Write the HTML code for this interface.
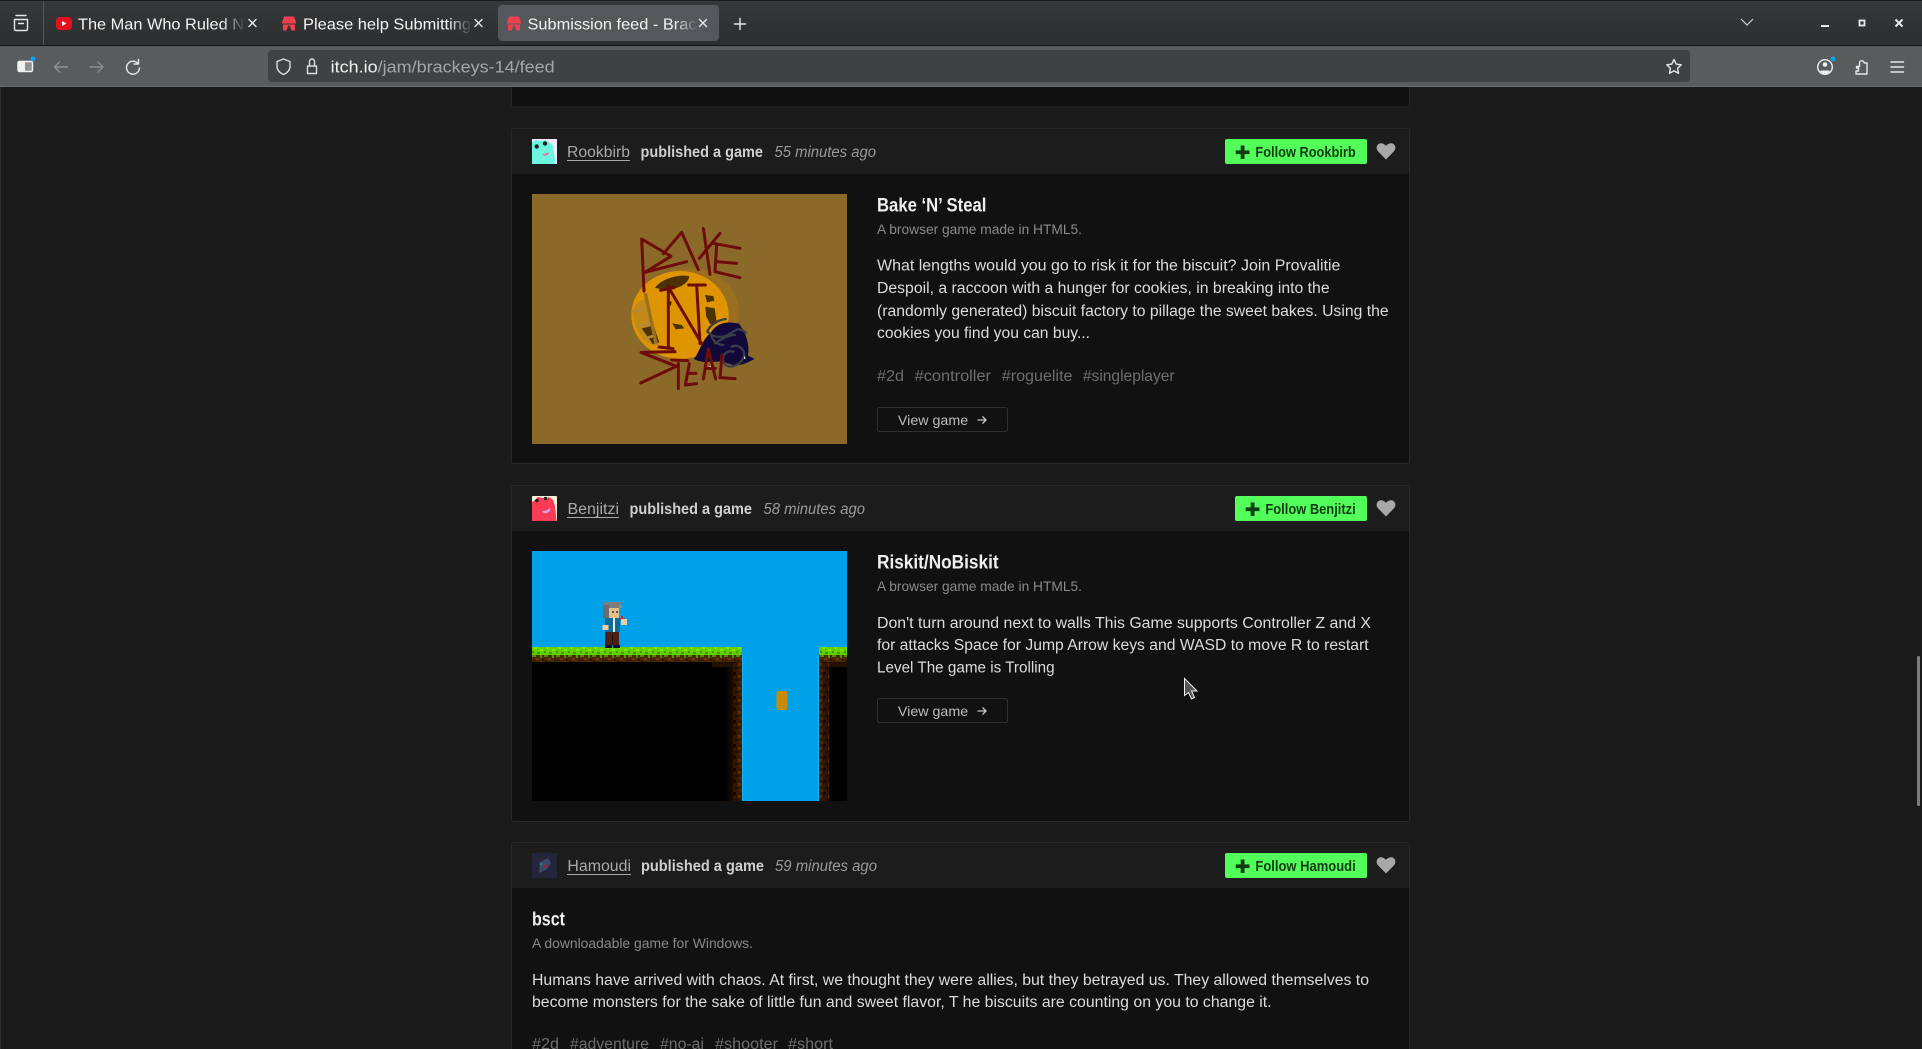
<!DOCTYPE html>
<html><head><meta charset="utf-8"><title>Submission feed</title>
<style>
html,body{margin:0;padding:0;background:#1a1a1a;overflow:hidden;width:1922px;height:1049px}
svg{display:block}
text{font-family:"Liberation Sans",sans-serif;white-space:pre}
.tab{font-size:16px;fill:#f2f2f2}
.name{font-size:15.5px;fill:#a9a9a9}
.pub{font-size:15.5px;font-weight:bold;fill:#cfcfcf}
.time{font-size:15.5px;font-style:italic;fill:#9a9a9a}
.fol{font-size:14.5px;font-weight:bold;fill:#0f3a11}
.ttl{font-size:19.5px;font-weight:bold;fill:#efefef}
.sub{font-size:14px;fill:#8a8a8a}
.dsc{font-size:15.5px;fill:#dcdcdc}
.tag{font-size:15.5px;fill:#6f6f6f}
.vw{font-size:14px;fill:#bdbdbd}
.ic{fill:none;stroke:#e8e8e8;stroke-width:1.4;stroke-linecap:round;stroke-linejoin:round}
.dim{fill:none;stroke:#8d9090;stroke-width:1.4;stroke-linecap:round;stroke-linejoin:round}
.sw{fill:none;stroke:#6e0b0b;stroke-width:9;stroke-linecap:round;stroke-linejoin:round}
</style></head>
<body>
<svg width="1922" height="1049" viewBox="0 0 1922 1049" xmlns="http://www.w3.org/2000/svg">
<defs>
<linearGradient id="f1" gradientUnits="userSpaceOnUse" x1="222" x2="244" y1="0" y2="0"><stop offset="0" stop-color="#f2f2f2"/><stop offset="1" stop-color="#f2f2f2" stop-opacity=".05"/></linearGradient>
<linearGradient id="f2" gradientUnits="userSpaceOnUse" x1="449" x2="471" y1="0" y2="0"><stop offset="0" stop-color="#f2f2f2"/><stop offset="1" stop-color="#f2f2f2" stop-opacity=".05"/></linearGradient>
<linearGradient id="f3" gradientUnits="userSpaceOnUse" x1="675" x2="697" y1="0" y2="0"><stop offset="0" stop-color="#f2f2f2"/><stop offset="1" stop-color="#f2f2f2" stop-opacity=".05"/></linearGradient>
<linearGradient id="tb" x1="0" x2="0" y1="0" y2="1"><stop offset="0" stop-color="#36383a"/><stop offset="1" stop-color="#2c2e30"/></linearGradient>
<linearGradient id="fadeL" x1="0" x2="1" y1="0" y2="0"><stop offset="0" stop-color="#000"/><stop offset="1" stop-color="#3a1b04"/></linearGradient>
<linearGradient id="fadeR" x1="0" x2="1" y1="0" y2="0"><stop offset="0" stop-color="#3a1b04"/><stop offset="1" stop-color="#000"/></linearGradient>
<pattern id="grass" patternUnits="userSpaceOnUse" x="532" y="647" width="12" height="16">
<rect width="12" height="16" fill="#4c2606"/>
<rect width="12" height="8" fill="#62cf00"/>
<rect x="2" y="0" width="3" height="2" fill="#84e600"/><rect x="8" y="2" width="3" height="2" fill="#84e600"/>
<rect x="0" y="4" width="2" height="2" fill="#3f9a00"/><rect x="5" y="5" width="3" height="2" fill="#3f9a00"/>
<rect x="0" y="8" width="4" height="2" fill="#4f8a00"/><rect x="8" y="8" width="2" height="3" fill="#3f9a00"/>
<rect x="4" y="11" width="3" height="2" fill="#6a390a"/><rect x="10" y="12" width="2" height="2" fill="#2e1703"/><rect x="1" y="13" width="2" height="2" fill="#2e1703"/>
</pattern>
<pattern id="dirt" patternUnits="userSpaceOnUse" x="733" y="660" width="9" height="12">
<rect width="9" height="12" fill="#3a1c04" fill-opacity=".55"/>
<rect x="0" y="0" width="3" height="3" fill="#000" fill-opacity=".6"/><rect x="5" y="3" width="3" height="3" fill="#5a2e07"/>
<rect x="2" y="7" width="3" height="2" fill="#1c0d02"/><rect x="6" y="9" width="3" height="3" fill="#4c2606"/>
</pattern>
</defs>

<!-- page -->
<rect width="1922" height="1049" fill="#1a1a1a"/>
<rect x="0" y="87" width="1" height="962" fill="#2b2b2b"/>

<!-- top card remainder -->
<rect x="511.5" y="80" width="898" height="27" rx="2" fill="#101010" stroke="#272727"/>

<!-- card 1 -->
<rect x="511.5" y="128.500" width="898" height="335" rx="2" fill="#111" stroke="#272727"/>
<path d="M512 174V131q0-2 2-2h893q2 0 2 2v43z" fill="#1c1c1c"/>
<rect x="532" y="139" width="25" height="25" fill="#f1e6fb"/>
<path d="M532 142l4-2 4 1 5-1 4 2 4 3 2 14 0 5h-23z" fill="#6df5dd"/>
<circle cx="536.700" cy="146.500" r="2.200" fill="#222"/><circle cx="545" cy="143.500" r="2.200" fill="#222"/>
<path d="M542.500 154q4 0 7-2-1 3-4 3.500q-2 .5-3-1.500z" fill="#f06a92"/>
<text class="name" x="567" y="157" textLength="63" lengthAdjust="spacingAndGlyphs">Rookbirb</text>
<rect x="567" y="160" width="63" height="1" fill="#a9a9a9"/>
<text class="pub" x="640.500" y="157" textLength="122.500" lengthAdjust="spacingAndGlyphs">published a game</text>
<text class="time" x="774.500" y="157" textLength="101.500" lengthAdjust="spacingAndGlyphs">55 minutes ago</text>
<rect x="1225" y="139" width="142" height="25" rx="2" fill="#52ff5a"/>
<rect x="1240.700" y="145.500" width="3.800" height="13.500" fill="#0f3d12"/><rect x="1235.700" y="150.400" width="13.800" height="3.700" fill="#0f3d12"/>
<text class="fol" x="1255.400" y="157" textLength="100.300" lengthAdjust="spacingAndGlyphs">Follow Rookbirb</text>
<path d="M1386 159.500l-7.700-7.900c-2.300-2.500-2.100-5.400-.3-7.100 2-1.900 5.200-1.600 8 1.300 2.800-2.900 6-3.200 8-1.300 1.800 1.700 2 4.600-.3 7.100z" fill="#a8a8a8"/>

<!-- bake n steal image -->
<rect x="532" y="194" width="315" height="250" fill="#8b6a29"/>
<g transform="translate(600 215) scale(.33333)">
<ellipse cx="265" cy="290" rx="152" ry="130" fill="#9a6f20"/>
<ellipse cx="240" cy="300" rx="146" ry="132" fill="#de9500"/>
<path d="M100 300c-2-25 8-42 40-50l38 135c-4 6-10 8-14 8-40-15-62-55-64-93z" fill="#c48a18"/>
<path d="M125 340l35-8 18 50-20 5z" fill="#4b3200"/>
<path d="M165 218c20-28 75-42 103-34-4 30-60 50-103 34z" fill="#4b3200"/>
<path d="M315 240l25 3 3 14-22 5z M316 275l28 5 6 42-20 5-12-25z M217 325l28 5 8 10-26 3z M205 258l10 2-2 12-10-2z" fill="#4b3200"/>
<path d="M97 290l40-8M112 333l38-8M128 372l36-10" stroke="#b58a37" stroke-width="8" fill="none"/>
<path d="M136 235l32 150" stroke="#9a6f20" stroke-width="10" fill="none"/>
<path d="M282 432c15-18 25-60 50-78 20-35 55-35 85-28l12 18c12 20 20 55 15 78l20 10-25 12c-30 12-50 5-70-5-30 0-60 8-87-7z" fill="#12083a"/>
<path d="M322 350c10-25 35-35 55-38M322 350c20 20 50 20 70 5 15-10 25-20 45-2M345 385c15-10 40-25 60-25M395 395c20-10 45 10 35 35-15 25-50 35-60 10-5-20 10-35 30-30M335 365c5 15 20 25 35 25" fill="none" stroke="#3a3d4a" stroke-width="7" stroke-linecap="round"/>
<rect x="432" y="425" width="4" height="7" fill="#ddd"/><rect x="328" y="453" width="6" height="3" fill="#ddd"/>
<path class="sw" d="M132 228L125 72l88 52-78 48 125-32M190 116l55-64 50 112M298 130l62-75M310 40l20 138M340 85l80 15M350 90l-5 80 75 18M350 140l60 5"/>
<path class="sw" d="M205 212l0 188M182 226l40-8M205 216l100 170M290 210l10 176M266 210l50 0M177 396l42 5"/>
<path class="sw" d="M225 410l-102 2 106 42-107 50M235 445l0 76M215 435l48 2M268 446l-12 64 34-4M262 475l26 0M310 492l15-90 22 90M318 460l28 0M366 420l-6 68 45 3"/>
</g>

<!-- card 1 text -->
<text class="ttl" x="877" y="211.500" textLength="109.400" lengthAdjust="spacingAndGlyphs">Bake ‘N’ Steal</text>
<text class="sub" x="877" y="234" textLength="205" lengthAdjust="spacingAndGlyphs">A browser game made in HTML5.</text>
<text class="dsc" x="877" y="270.500" textLength="463.400" lengthAdjust="spacingAndGlyphs">What lengths would you go to risk it for the biscuit? Join Provalitie</text>
<text class="dsc" x="877" y="293" textLength="452.600" lengthAdjust="spacingAndGlyphs">Despoil, a raccoon with a hunger for cookies, in breaking into the</text>
<text class="dsc" x="877" y="316" textLength="511.600" lengthAdjust="spacingAndGlyphs">(randomly generated) biscuit factory to pillage the sweet bakes. Using the</text>
<text class="dsc" x="877" y="338" textLength="213" lengthAdjust="spacingAndGlyphs">cookies you find you can buy...</text>
<text class="tag" x="877" y="381" textLength="27" lengthAdjust="spacingAndGlyphs">#2d</text>
<text class="tag" x="914.600" y="381" textLength="76.400" lengthAdjust="spacingAndGlyphs">#controller</text>
<text class="tag" x="1001.800" y="381" textLength="70.700" lengthAdjust="spacingAndGlyphs">#roguelite</text>
<text class="tag" x="1082.900" y="381" textLength="91.700" lengthAdjust="spacingAndGlyphs">#singleplayer</text>
<rect x="877.500" y="407.500" width="130" height="24" rx="2" fill="#111" stroke="#303030"/>
<text class="vw" x="897.900" y="425" textLength="70.300" lengthAdjust="spacingAndGlyphs">View game</text>
<path d="M977.500 420h8.500M982.500 416.500l3.500 3.500-3.500 3.500" fill="none" stroke="#c8c8c8" stroke-width="1.300"/>

<!-- card 2 -->
<rect x="511.500" y="485.500" width="898" height="336" rx="2" fill="#111" stroke="#272727"/>
<path d="M512 531V488q0-2 2-2h893q2 0 2 2v43z" fill="#1c1c1c"/>
<rect x="532" y="496" width="25" height="25" rx="1" fill="#fbf0d5"/>
<path d="M532 502l3-2 3-3 5 1 2 2 4-3 4 3 2 6 1.500 15h-24.500z" fill="#fb3a55"/>
<circle cx="537" cy="500.500" r="1.800" fill="#222"/><circle cx="545.500" cy="498.500" r="1.800" fill="#222"/>
<path d="M542 511q5 0 8-3 1 3-3 5-3 1-5-2z" fill="#d5a4ef"/>
<text class="name" x="567.500" y="514" textLength="51.500" lengthAdjust="spacingAndGlyphs">Benjitzi</text>
<rect x="567" y="517" width="52" height="1" fill="#a9a9a9"/>
<text class="pub" x="629.500" y="514" textLength="122.500" lengthAdjust="spacingAndGlyphs">published a game</text>
<text class="time" x="763.500" y="514" textLength="101.500" lengthAdjust="spacingAndGlyphs">58 minutes ago</text>
<rect x="1235" y="496" width="132" height="25" rx="2" fill="#52ff5a"/>
<rect x="1250.700" y="502.500" width="3.800" height="13.500" fill="#0f3d12"/><rect x="1245.700" y="507.400" width="13.800" height="3.700" fill="#0f3d12"/>
<text class="fol" x="1265.400" y="514" textLength="90.300" lengthAdjust="spacingAndGlyphs">Follow Benjitzi</text>
<path d="M1386 516.500l-7.700-7.900c-2.300-2.500-2.100-5.400-.3-7.100 2-1.900 5.200-1.600 8 1.300 2.800-2.900 6-3.200 8-1.300 1.800 1.700 2 4.600-.3 7.100z" fill="#a8a8a8"/>

<!-- platformer image -->
<rect x="532" y="551" width="315" height="250" fill="#00a1e8"/>
<rect x="532" y="662" width="210" height="139" fill="#000"/>
<rect x="819" y="662" width="28" height="139" fill="#000"/>
<rect x="725" y="662" width="17" height="139" fill="url(#fadeL)"/>
<rect x="819" y="662" width="14" height="139" fill="url(#fadeR)"/>
<rect x="733" y="660" width="9" height="141" fill="url(#dirt)"/>
<rect x="819" y="660" width="10" height="141" fill="url(#dirt)"/>
<rect x="712" y="662" width="21" height="5" fill="#241002"/>
<rect x="829" y="662" width="18" height="5" fill="#241002"/>
<rect x="532" y="647" width="210" height="15" fill="url(#grass)"/>
<rect x="819" y="647" width="28" height="15" fill="url(#grass)"/>
<rect x="742" y="656" width="1" height="145" fill="#19b6ff"/><rect x="818" y="656" width="1" height="145" fill="#19b6ff"/>
<path d="M777 691h10v1h.500v16h-.500v2h-10v-2h-.500v-16h.500z" fill="#c98a0a"/>
<!-- character -->
<g shape-rendering="crispEdges">
<rect x="604" y="602" width="17" height="6" fill="#7d7d7d"/><rect x="603" y="605" width="6" height="13" fill="#6c6c6c"/>
<rect x="619" y="605" width="3" height="3" fill="#8f8f8f"/>
<rect x="609" y="608" width="10" height="10" fill="#e9bd86"/><rect x="612" y="611" width="2" height="2" fill="#555"/><rect x="616" y="611" width="2" height="2" fill="#555"/>
<rect x="605" y="618" width="15" height="14" fill="#0f6a96"/><rect x="613" y="618" width="2" height="14" fill="#e6f2f6"/>
<rect x="605" y="632" width="14" height="13" fill="#4c2016"/><rect x="612" y="635" width="1" height="10" fill="#2a100a"/>
<rect x="605" y="645" width="7" height="3" fill="#0b0b0b"/><rect x="613" y="645" width="7" height="3" fill="#0b0b0b"/>
<rect x="602.500" y="625" width="6" height="5" fill="#f0cda0"/>
<rect x="621" y="619" width="6" height="6" fill="#f0cda0"/><rect x="621" y="616" width="2" height="3" fill="#d8241c"/><rect x="619" y="618" width="2" height="2" fill="#b83030"/>
</g>

<!-- card 2 text -->
<text class="ttl" x="877" y="568.500" textLength="121.600" lengthAdjust="spacingAndGlyphs">Riskit/NoBiskit</text>
<text class="sub" x="877" y="591" textLength="205" lengthAdjust="spacingAndGlyphs">A browser game made in HTML5.</text>
<text class="dsc" x="877" y="628" textLength="494" lengthAdjust="spacingAndGlyphs">Don't turn around next to walls This Game supports Controller Z and X</text>
<text class="dsc" x="877" y="650" textLength="491.600" lengthAdjust="spacingAndGlyphs">for attacks Space for Jump Arrow keys and WASD to move R to restart</text>
<text class="dsc" x="877" y="672.500" textLength="177.600" lengthAdjust="spacingAndGlyphs">Level The game is Trolling</text>
<rect x="877.500" y="698.500" width="130" height="24" rx="2" fill="#111" stroke="#303030"/>
<text class="vw" x="897.900" y="716" textLength="70.300" lengthAdjust="spacingAndGlyphs">View game</text>
<path d="M977.500 711h8.500M982.500 707.500l3.500 3.500-3.500 3.500" fill="none" stroke="#c8c8c8" stroke-width="1.300"/>
<!-- mouse cursor -->
<path d="M1184.500 678.500v17l4-3 3 6.500 3-1.500-3-6.500h5.500z" fill="#555" stroke="#eee" stroke-width="1"/>

<!-- card 3 -->
<rect x="511.500" y="842.500" width="898" height="230" rx="2" fill="#111" stroke="#272727"/>
<path d="M512 888V845q0-2 2-2h893q2 0 2 2v43z" fill="#1c1c1c"/>
<rect x="532" y="853" width="25" height="25" fill="#24243a"/>
<path d="M540 862l8-4 3 5-5 7-7 3z" fill="#3c4a66"/><circle cx="546" cy="866" r="2.200" fill="#7a3044"/><circle cx="541" cy="864" r="1.300" fill="#3a7a90"/>
<text class="name" x="567.400" y="871" textLength="63.600" lengthAdjust="spacingAndGlyphs">Hamoudi</text>
<rect x="567" y="874" width="64" height="1" fill="#a9a9a9"/>
<text class="pub" x="641" y="871" textLength="123" lengthAdjust="spacingAndGlyphs">published a game</text>
<text class="time" x="775" y="871" textLength="102" lengthAdjust="spacingAndGlyphs">59 minutes ago</text>
<rect x="1225" y="853" width="142" height="25" rx="2" fill="#52ff5a"/>
<rect x="1240.700" y="859.500" width="3.800" height="13.500" fill="#0f3d12"/><rect x="1235.700" y="864.400" width="13.800" height="3.700" fill="#0f3d12"/>
<text class="fol" x="1255.400" y="871" textLength="100.300" lengthAdjust="spacingAndGlyphs">Follow Hamoudi</text>
<path d="M1386 873.500l-7.700-7.900c-2.300-2.500-2.100-5.400-.3-7.100 2-1.900 5.200-1.600 8 1.300 2.800-2.900 6-3.200 8-1.300 1.800 1.700 2 4.600-.3 7.100z" fill="#a8a8a8"/>
<text class="ttl" x="532" y="925.500" textLength="33" lengthAdjust="spacingAndGlyphs">bsct</text>
<text class="sub" x="532" y="948" textLength="221" lengthAdjust="spacingAndGlyphs">A downloadable game for Windows.</text>
<text class="dsc" x="532" y="985" textLength="837" lengthAdjust="spacingAndGlyphs">Humans have arrived with chaos. At first, we thought they were allies, but they betrayed us. They allowed themselves to</text>
<text class="dsc" x="532" y="1007" textLength="739.600" lengthAdjust="spacingAndGlyphs">become monsters for the sake of little fun and sweet flavor, T he biscuits are counting on you to change it.</text>
<text class="tag" x="532" y="1049" textLength="27" lengthAdjust="spacingAndGlyphs">#2d</text>
<text class="tag" x="570" y="1049" textLength="79" lengthAdjust="spacingAndGlyphs">#adventure</text>
<text class="tag" x="660" y="1049" textLength="44" lengthAdjust="spacingAndGlyphs">#no-ai</text>
<text class="tag" x="715" y="1049" textLength="63" lengthAdjust="spacingAndGlyphs">#shooter</text>
<text class="tag" x="788" y="1049" textLength="45" lengthAdjust="spacingAndGlyphs">#short</text>

<!-- scrollbar -->
<rect x="1917" y="656" width="3" height="150" rx="1" fill="#7c7c7c"/>

<!-- browser chrome -->
<rect x="0" y="0" width="1922" height="45" fill="url(#tb)"/>
<rect x="0" y="0" width="1922" height="1" fill="#1a1b1c"/>
<rect x="0" y="45" width="1922" height="1" fill="#141516"/>
<rect x="0" y="46" width="1922" height="40" fill="#585c5d"/>
<rect x="0" y="86" width="1922" height="1" fill="#6b6e6f"/>
<rect x="43" y="1" width="1" height="44" fill="#55585a"/>

<!-- tab list icon -->
<path class="ic" d="M14.500 19.500h13v9.500q0 1.500-1.500 1.500h-10q-1.500 0-1.500-1.500zM16 15.500h10M18.500 23.500h5"/>

<!-- tab 1 -->
<rect x="56" y="17" width="16" height="13" rx="4" fill="#e8101e"/>
<path d="M62 21l4.500 2.500-4.500 2.500z" fill="#fff"/>
<text class="tab" x="78" y="29.500" textLength="166" lengthAdjust="spacingAndGlyphs" style="fill:url(#f1)">The Man Who Ruled N</text>
<path class="ic" d="M249 19.500l7 7M256 19.500l-7 7"/>

<!-- tab 2 -->
<path d="M284 16.500h10l2 6v1h-14v-1z" fill="#f0404f"/>
<path d="M283 24.500h12v6h-12z" fill="#f0404f"/>
<path d="M286.500 30.500l1.800-5h1.400l1.800 5z" fill="#2f3133"/>
<text class="tab" x="303" y="29.500" textLength="168" lengthAdjust="spacingAndGlyphs" style="fill:url(#f2)">Please help Submitting</text>
<path class="ic" d="M475 19.500l7 7M482 19.500l-7 7"/>

<!-- tab 3 -->
<rect x="498" y="5" width="221" height="36" rx="4" fill="#54585a"/>
<path d="M509 16.500h10l2 6v1h-14v-1z" fill="#f0404f"/>
<path d="M508 24.500h12v6h-12z" fill="#f0404f"/>
<path d="M511.500 30.500l1.800-5h1.400l1.800 5z" fill="#54585a"/>
<text class="tab" x="527.500" y="29.500" textLength="169" lengthAdjust="spacingAndGlyphs" style="fill:url(#f3)">Submission feed - Brac</text>
<path class="ic" d="M699.500 19.500l7 7M706.500 19.500l-7 7"/>

<!-- new tab -->
<path class="ic" d="M740 18.500v11M734.500 24h11"/>

<!-- tab-strip right -->
<path d="M1741 19l6 6 6-6" fill="none" stroke="#d0d0d0" stroke-width="1.200"/>
<rect x="1821" y="25" width="8" height="2" fill="#e8e8e8"/>
<rect x="1859.500" y="20.500" width="5" height="5" fill="none" stroke="#e8e8e8" stroke-width="1.800"/>
<path d="M1895.500 19.500l7 7M1902.500 19.500l-7 7" stroke="#e8e8e8" stroke-width="2" fill="none"/>

<!-- toolbar left -->
<rect x="18" y="61.500" width="14.500" height="10" rx="1.500" fill="#8f9292" stroke="#f2f2f2" stroke-width="1.500"/>
<rect x="18" y="61.500" width="7" height="10" fill="#f2f2f2"/>
<circle cx="33" cy="59" r="2.500" fill="#0aa0f0"/>
<path class="dim" d="M54.500 67h13M59.500 62l-5 5 5 5"/>
<path class="dim" d="M90 67h13M98 62l5 5-5 5"/>
<path class="ic" d="M138 63.500a6.500 6.500 0 1 0 1.500 4.500M138.500 59.500v4.500h-4.500"/>

<!-- URL bar -->
<rect x="268" y="50" width="1422" height="32" rx="4" fill="#3e4243"/>
<path class="ic" d="M283.500 59l6.500 2.500v4.500c0 4-2.500 6.800-6.500 8.500-4-1.700-6.500-4.500-6.500-8.500v-4.500z" style="stroke:#dcdcdc"/>
<path class="ic" d="M307.500 66h9v7.500h-9zM309.500 66v-4.500a2.500 2.500 0 0 1 5 0v4.500" style="stroke:#dcdcdc"/>
<text x="330.600" y="72.500" font-size="16.500" fill="#f4f4f4" textLength="47" lengthAdjust="spacingAndGlyphs">itch.io</text>
<text x="377.600" y="72.500" font-size="16.500" fill="#a4a7a7" textLength="177" lengthAdjust="spacingAndGlyphs">/jam/brackeys-14/feed</text>
<path class="ic" d="M1674 59.500l2.200 4.600 5 .7-3.600 3.500.9 5-4.500-2.400-4.500 2.400.9-5-3.600-3.500 5-.7z"/>

<!-- toolbar right -->
<circle cx="1825" cy="67" r="7.300" fill="none" stroke="#efefef" stroke-width="1.400"/>
<circle cx="1825" cy="64.500" r="2.300" fill="#efefef"/>
<path d="M1820.500 70.500h9v1.500l-2.500 1.500h-4l-2.500-1.500z" fill="#efefef"/>
<circle cx="1833" cy="59" r="2.500" fill="#0aa0f0"/>
<path class="ic" d="M1856.500 66.500h3v-3.500a2.300 2.300 0 0 1 4.600 0v0h2.900v11h-11v-3h2.500v-3h-2z"/>
<path class="ic" d="M1891 62h12.500M1891 67h12.500M1891 72h12.500"/>
</svg>
</body></html>
